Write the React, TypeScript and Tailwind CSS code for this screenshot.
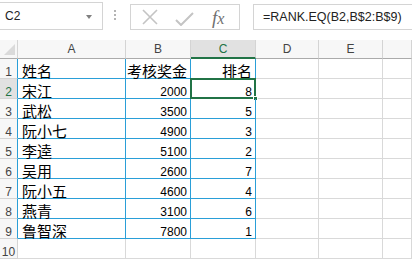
import React from 'react'

const rows = [
  ['姓名', '考核奖金', '排名'],
  ['宋江', '2000', '8'],
  ['武松', '3500', '5'],
  ['阮小七', '4900', '3'],
  ['李逵', '5100', '2'],
  ['吴用', '2600', '7'],
  ['阮小五', '4600', '4'],
  ['燕青', '3100', '6'],
  ['鲁智深', '7800', '1'],
]

const cn = "font-['Noto_Sans_CJK_SC',sans-serif] text-[15px] leading-none"
const num = "font-['Liberation_Sans',Arial,sans-serif] text-[12px] leading-none"

const FormulaBar = () => (
  <div className="flex h-[40px] items-start font-['Liberation_Sans',Arial,sans-serif]">
    <div className="mt-[2px] flex h-[28px] w-[103px] items-center border border-l-0 border-[#d4d4d4] pl-[5px] text-[12px] text-[#222]">
      <span className="flex-1 leading-none">C2</span>
      <span className="mr-[10px] mt-[1px] h-0 w-0 border-x-[3px] border-t-[4px] border-x-transparent border-t-[#808080]" />
    </div>
    <div className="flex h-[30px] w-[27px] flex-col items-center justify-center gap-[2px] pr-[3px]">
      <span className="h-[2px] w-[2px] bg-[#b4b4b4]" />
      <span className="h-[2px] w-[2px] bg-[#b4b4b4]" />
      <span className="h-[2px] w-[2px] bg-[#b4b4b4]" />
    </div>
    <div className="mt-[4px] flex h-[26px] w-[110px] items-center border border-[#d4d4d4]">
      <svg width="18" height="16" viewBox="0 0 18 16" className="ml-[10px]">
        <path d="M2 1 L16 15 M16 1 L2 15" stroke="#c4c4c4" strokeWidth="1.6" fill="none" />
      </svg>
      <svg width="19" height="14" viewBox="0 0 19 14" className="ml-[16px] mt-[3px]">
        <path d="M1 8 L6 13 L18 1" stroke="#c4c4c4" strokeWidth="2" fill="none" />
      </svg>
      <span className="ml-[18px] font-['Liberation_Serif',serif] text-[19px] italic leading-none text-[#707070]">
        f<span className="text-[16px]">x</span>
      </span>
    </div>
    <div className="ml-[13px] mt-[4px] flex h-[26px] flex-1 items-center border border-r-0 border-[#d4d4d4] pl-[9px] text-[12.5px] leading-none text-[#222]">
      =RANK.EQ(B2,B$2:B$9)
    </div>
  </div>
)

const App = () => {
  const blue = 'border-[#2a9fd8]'
  return (
    <div className="h-[261px] w-[412px] overflow-hidden bg-white">
      <FormulaBar />
      <div className="grid grid-cols-[18px_108px_65px_65px_63px_64px_1fr] grid-rows-[19px_repeat(10,20px)] text-black">
        <div className="flex items-end justify-end border-b border-r border-b-[#ababab] border-r-[#d4d4d4] bg-[#f7f7f7] pb-[3px] pr-[2px]">
          <svg width="11" height="11" viewBox="0 0 11 11">
            <path d="M11 0 L11 11 L0 11 Z" fill="#dadada" />
          </svg>
        </div>
        {['A', 'B', 'C', 'D', 'E', ''].map((c) => (
          <div
            key={c || 'F'}
            className={
              c === 'C'
                ? `flex items-end justify-center border-b-2 border-r border-b-[#217346] border-r-[#d4d4d4] bg-[#e1e1e1] pb-[2px] ${num} text-[#217346]`
                : `flex items-end justify-center border-b border-r border-b-[#ababab] border-r-[#d4d4d4] bg-[#f7f7f7] pb-[3px] ${num} text-[#444]`
            }
          >
            {c}
          </div>
        ))}
        {Array.from({ length: 10 }).map((_, i) => {
          const r = rows[i]
          const sel = i === 1
          const inTable = i < 9
          return (
            <React.Fragment key={i}>
              <div
                className={`flex items-end justify-center border-b border-r border-b-[#d4d4d4] ${num} ${
                  inTable ? 'border-r-[#2a9fd8]' : 'border-r-[#d4d4d4]'
                } ${sel ? 'bg-[#e1e1e1] text-[#217346]' : 'bg-[#f7f7f7] text-[#444]'}`}
              >
                {i + 1}
              </div>
              {r ? (
                <>
                  <div className={`flex items-end border-b border-r ${blue} pl-[4px] ${cn}`}>{r[0]}</div>
                  <div className={`flex items-end justify-end border-b border-r ${blue} pr-[3px] ${i === 0 ? cn : num}`}>
                    {r[1]}
                  </div>
                  <div className={`relative flex items-end justify-end border-b border-r ${blue} pr-[3px] ${i === 0 ? cn : num}`}>
                    {r[2]}
                    {sel && (
                      <>
                        <span className="absolute -left-[1px] -top-[1px] h-[21px] w-[66px] border-2 border-[#217346]" />
                        <span className="absolute -bottom-[3px] -right-[3px] h-[5px] w-[5px] border border-white bg-[#217346]" />
                      </>
                    )}
                  </div>
                </>
              ) : (
                <>
                  <div className="border-b border-r border-[#d9d9d9]" />
                  <div className="border-b border-r border-[#d9d9d9]" />
                  <div className="border-b border-r border-[#d9d9d9]" />
                </>
              )}
              <div className="border-b border-r border-[#d9d9d9]" />
              <div className="border-b border-r border-[#d9d9d9]" />
              <div className="border-b border-r border-[#d9d9d9]" />
            </React.Fragment>
          )
        })}
      </div>
    </div>
  )
}

export default App
